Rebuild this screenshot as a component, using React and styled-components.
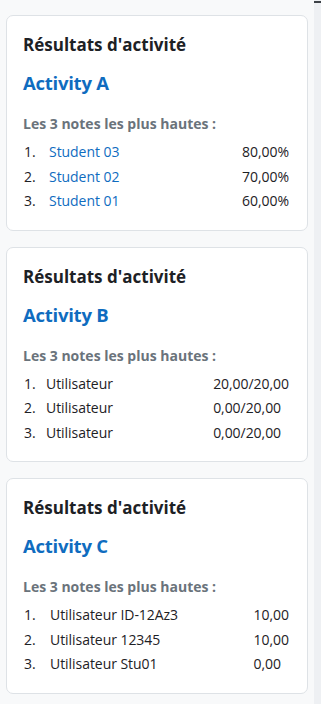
import React from "react";
import styled, { createGlobalStyle } from "styled-components";

const Global = createGlobalStyle`
  html, body { margin: 0; padding: 0; background: #f8f9fa; }
  body { font-family: "Open Sans", "Noto Sans", sans-serif; color: #1d2125; }
  * { box-sizing: border-box; }
`;

const Page = styled.div`
  display: flex;
  min-height: 704px;
  width: 321px;
`;

const Main = styled.main`
  flex: 1;
  display: flex;
  flex-direction: column;
  gap: 16px;
  padding: 15px 6px 0 6px;
`;

const Drawer = styled.aside`
  width: 7px;
  background: #eef0f3;
  position: relative;
  &::before {
    content: "";
    position: absolute;
    top: 1px;
    left: 0;
    right: 0;
    height: 2px;
    background: #3d4247;
  }
`;

const Card = styled.section`
  background: #fff;
  border: 1px solid #dee2e6;
  border-radius: 7px;
  padding: 16px;
`;

const Title = styled.h5`
  margin: 0;
  font-size: 17px;
  line-height: 26px;
  font-weight: 700;
  color: #1d2125;
  letter-spacing: 0;
`;

const ActivityName = styled.h3`
  margin: 13px 0 0;
  font-size: 18.5px;
  line-height: 24px;
  font-weight: 700;
  color: #0f6cbf;
  letter-spacing: -0.25px;
`;

const Caption = styled.h6`
  margin: 19px 0 0;
  font-size: 14px;
  line-height: 20px;
  font-weight: 700;
  color: #6a737b;
  letter-spacing: 0;
`;

const Table = styled.table`
  width: 100%;
  margin-top: 6px;
  border-collapse: collapse;
  font-size: 14px;
  letter-spacing: -0.05px;
`;

const Cell = styled.td`
  padding: 0;
  height: 24.5px;
  line-height: 20px;
  white-space: nowrap;
  text-align: left;
  color: ${(p) => (p.$link ? "#0f6cbf" : "#1d2125")};
`;

const Rank = styled(Cell)`
  width: ${(p) => p.$w}px;
  padding-left: 1px;
`;

const Grade = styled(Cell)`
  width: 1%;
  padding-right: 2px;
`;

const blocks = [
  {
    name: "Activity A",
    link: true,
    rank: 26,
    rows: [
      ["Student 03", "80,00%"],
      ["Student 02", "70,00%"],
      ["Student 01", "60,00%"],
    ],
  },
  {
    name: "Activity B",
    link: false,
    rank: 23,
    rows: [
      ["Utilisateur", "20,00/20,00"],
      ["Utilisateur", "0,00/20,00"],
      ["Utilisateur", "0,00/20,00"],
    ],
  },
  {
    name: "Activity C",
    link: false,
    rank: 27,
    rows: [
      ["Utilisateur ID-12Az3", "10,00"],
      ["Utilisateur 12345", "10,00"],
      ["Utilisateur Stu01", "0,00"],
    ],
  },
];

export default function App() {
  return (
    <>
      <Global />
      <Page>
        <Main>
          {blocks.map((b) => (
            <Card key={b.name}>
              <Title>Résultats d'activité</Title>
              <ActivityName>{b.name}</ActivityName>
              <Caption>Les 3 notes les plus hautes :</Caption>
              <Table>
                <tbody>
                  {b.rows.map((r, i) => (
                    <tr key={i}>
                      <Rank $w={b.rank}>{i + 1}.</Rank>
                      <Cell $link={b.link}>{r[0]}</Cell>
                      <Grade>{r[1]}</Grade>
                    </tr>
                  ))}
                </tbody>
              </Table>
            </Card>
          ))}
        </Main>
        <Drawer />
      </Page>
    </>
  );
}
